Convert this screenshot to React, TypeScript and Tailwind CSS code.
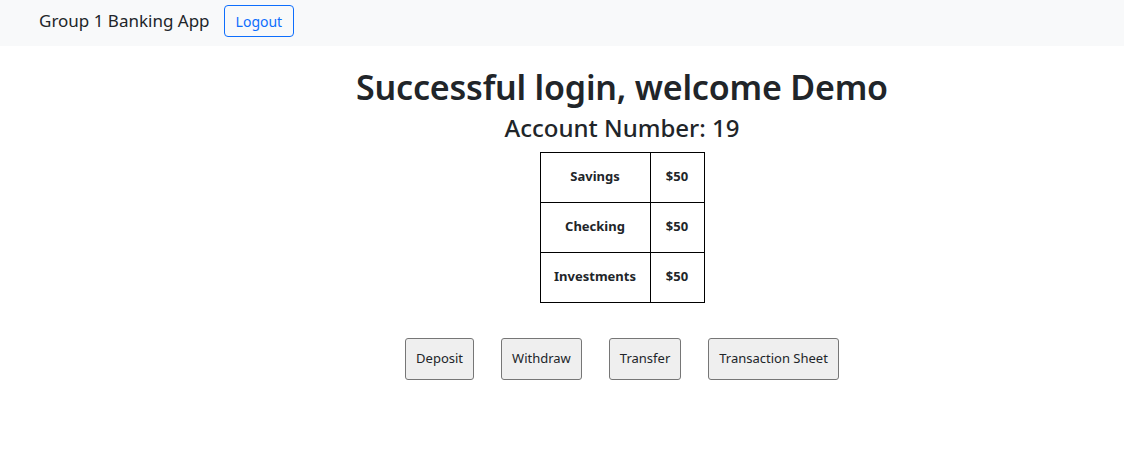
import React from "react";

export default function App() {
  const accounts = [
    { name: "Savings", amount: "$50" },
    { name: "Checking", amount: "$50" },
    { name: "Investments", amount: "$50" },
  ];
  const actions = ["Deposit", "Withdraw", "Transfer", "Transaction Sheet"];

  return (
    <div className="min-h-[458px] bg-white text-[#212529] font-['Noto_Sans',sans-serif]">
      <nav className="h-[46px] bg-[#f8f9fa] flex items-center pl-[39px] pb-[4px]">
        <span className="text-[17px] mr-[14px]">Group 1 Banking App</span>
        <button className="h-[32px] px-[11px] text-[14px] text-[#0d6efd] border border-[#0d6efd] rounded-[4px]">
          Logout
        </button>
      </nav>

      <main className="pl-[120px] flex flex-col items-center">
        <h1 className="mt-[21px] text-[34px] leading-[1.2] font-semibold tracking-[-0.2px]">
          Successful login, welcome Demo
        </h1>
        <h4 className="mt-[6px] text-[24px] leading-[1.2] font-medium">Account Number: 19</h4>

        <table className="mt-[9px] border-collapse">
          <tbody>
            {accounts.map((a) => (
              <tr key={a.name}>
                <td className="w-[110px] h-[50px] border border-black text-center text-[13px] font-bold">
                  {a.name}
                </td>
                <td className="w-[54px] h-[50px] border border-black text-center text-[13px] font-bold">
                  {a.amount}
                </td>
              </tr>
            ))}
          </tbody>
        </table>

        <div className="mt-[35px] flex gap-[27px]">
          {actions.map((label) => (
            <button
              key={label}
              className="h-[42px] px-[10px] text-[13px] bg-[#efefef] border border-[#767676] rounded-[3px]"
            >
              {label}
            </button>
          ))}
        </div>
      </main>
    </div>
  );
}
